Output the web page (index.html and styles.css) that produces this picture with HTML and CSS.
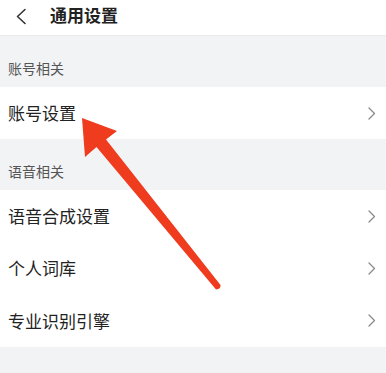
FILE: index.html
```html
<!DOCTYPE html>
<html lang="zh">
<head>
<meta charset="utf-8">
<link rel="stylesheet" href="styles.css">
</head>
<body>
<div class="page">
  <header class="topbar">
    <svg class="back" width="12" height="17" viewBox="0 0 12 17"><path d="M10 1.5 L2.5 8.5 L10 15.5" fill="none" stroke="#333" stroke-width="1.6" stroke-linecap="round" stroke-linejoin="round"/></svg>
    <h1 class="title">通用设置</h1>
  </header>
  <div class="section">账号相关</div>
  <div class="row"><span>账号设置</span><svg class="chev" width="8" height="13" viewBox="0 0 8 13"><path d="M1 1 L6.5 6.5 L1 12" fill="none" stroke="#8a8a8a" stroke-width="1.3" stroke-linecap="round" stroke-linejoin="round"/></svg></div>
  <div class="section">语音相关</div>
  <div class="row"><span>语音合成设置</span><svg class="chev" width="8" height="13" viewBox="0 0 8 13"><path d="M1 1 L6.5 6.5 L1 12" fill="none" stroke="#8a8a8a" stroke-width="1.3" stroke-linecap="round" stroke-linejoin="round"/></svg></div>
  <div class="row"><span>个人词库</span><svg class="chev" width="8" height="13" viewBox="0 0 8 13"><path d="M1 1 L6.5 6.5 L1 12" fill="none" stroke="#8a8a8a" stroke-width="1.3" stroke-linecap="round" stroke-linejoin="round"/></svg></div>
  <div class="row tall"><span>专业识别引擎</span><svg class="chev" width="8" height="13" viewBox="0 0 8 13"><path d="M1 1 L6.5 6.5 L1 12" fill="none" stroke="#8a8a8a" stroke-width="1.3" stroke-linecap="round" stroke-linejoin="round"/></svg></div>
  <div class="section">简词设置</div>
  <svg class="arrow" width="386" height="373" viewBox="0 0 386 373">
    <path d="M82 118 L117 131 L106 139.5 L220.5 285 Q221 289 216 289.5 L96.5 147 L85 157 Z" fill="#ef3b1e"/>
  </svg>
</div>
</body>
</html>
```
FILE: styles.css
```css
* { box-sizing: border-box; margin: 0; padding: 0; }
html, body { width: 386px; height: 373px; overflow: hidden; background: #f2f3f5; }
body { font-family: "Noto Sans CJK SC", "Noto Sans", sans-serif; }
.page { position: relative; width: 386px; height: 373px; }
.topbar {
  height: 36px;
  background: #fff;
  display: flex;
  align-items: center;
  padding-left: 15px;
  border-bottom: 1px solid #ebebeb;
}
.back { margin-top: -3px; }
.title {
  margin-left: 23px;
  margin-top: -5px;
  font-size: 17px;
  font-weight: 700;
  color: #222;
  line-height: 20px;
}
.section {
  height: 51px;
  padding: 22px 0 0 8px;
  font-size: 14px;
  line-height: 20px;
  color: #555;
}
.row {
  height: 52px;
  background: #fff;
  display: flex;
  align-items: center;
  justify-content: space-between;
  padding: 0 10px 0 8px;
  font-size: 17px;
  color: #222;
}
.row.tall { height: 53px; }
.row span { line-height: 22px; }
.arrow { position: absolute; left: 0; top: 0; pointer-events: none; }
```
